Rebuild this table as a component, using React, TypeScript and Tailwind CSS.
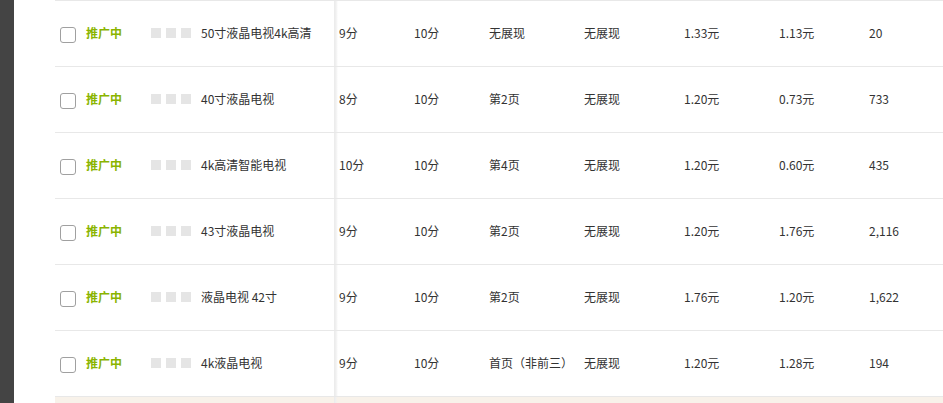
import React from "react";

type Row = {
  name: string;
  a: string;
  b: string;
  c: string;
  d: string;
  e: string;
  f: string;
  g: string;
};

const rows: Row[] = [
  { name: "50寸液晶电视4k高清", a: "9分", b: "10分", c: "无展现", d: "无展现", e: "1.33元", f: "1.13元", g: "20" },
  { name: "40寸液晶电视", a: "8分", b: "10分", c: "第2页", d: "无展现", e: "1.20元", f: "0.73元", g: "733" },
  { name: "4k高清智能电视", a: "10分", b: "10分", c: "第4页", d: "无展现", e: "1.20元", f: "0.60元", g: "435" },
  { name: "43寸液晶电视", a: "9分", b: "10分", c: "第2页", d: "无展现", e: "1.20元", f: "1.76元", g: "2,116" },
  { name: "液晶电视 42寸", a: "9分", b: "10分", c: "第2页", d: "无展现", e: "1.76元", f: "1.20元", g: "1,622" },
  { name: "4k液晶电视", a: "9分", b: "10分", c: "首页（非前三）", d: "无展现", e: "1.20元", f: "1.28元", g: "194" },
];

const font = { fontFamily: '"Microsoft YaHei", "Noto Sans CJK SC", "Noto Sans", sans-serif' };

export default function App() {
  return (
    <div className="flex w-[943px] h-[403px] overflow-hidden bg-white text-[12px] leading-[16px] text-[#333]" style={font}>
      <div className="w-[14px] shrink-0 bg-[#444]" />
      <div className="w-[41px] shrink-0 bg-white" />
      <div className="flex-1 flex flex-col">
        <div className="flex border-t border-[#e8e8e8]">
          {/* left fixed part */}
          <div className="w-[279px] shrink-0 flex flex-col">
            {rows.map((r, i) => (
              <div key={i} className="h-[66px] border-b border-[#e8e8e8] flex items-center pb-[2px]">
                <div className="w-[31px] pl-[5px] flex items-center">
                  <span className="block w-[16px] h-[16px] mt-[5px] rounded-[3px] border border-[#a0a0a0] bg-white" />
                </div>
                <div className="w-[65px] font-bold text-[#8ab400]">推广中</div>
                <div className="w-[50px] flex gap-[5px] mt-[1px]">
                  <span className="block w-[10px] h-[10px] bg-[#e5e5e5]" />
                  <span className="block w-[10px] h-[10px] bg-[#e5e5e5]" />
                  <span className="block w-[10px] h-[10px] bg-[#e5e5e5]" />
                </div>
                <div className="flex-1 whitespace-nowrap">{r.name}</div>
              </div>
            ))}
          </div>
          {/* scrolling part */}
          <div className="flex-1 flex flex-col bg-[linear-gradient(to_right,#ebebeb_0px,#f0f0f0_2px,#f8f8f8_3px,#ffffff_4px)]">
            {rows.map((r, i) => (
              <div key={i} className="h-[66px] border-b border-[#e8e8e8] flex items-center pl-[5px] pb-[2px] whitespace-nowrap">
                <div className="w-[75px]">{r.a}</div>
                <div className="w-[75px]">{r.b}</div>
                <div className="w-[95px]">{r.c}</div>
                <div className="w-[100px]">{r.d}</div>
                <div className="w-[95px]">{r.e}</div>
                <div className="w-[90px]">{r.f}</div>
                <div className="w-[70px]">{r.g}</div>
              </div>
            ))}
          </div>
        </div>
        <div className="flex h-[10px]">
          <div className="w-[279px] shrink-0 bg-[#f8f2ea]" />
          <div className="flex-1 bg-[linear-gradient(to_right,#ebebeb_0px,#f0f0f0_2px,#f7f1ea_3px,#f8f2ea_4px)]" />
        </div>
      </div>
    </div>
  );
}
